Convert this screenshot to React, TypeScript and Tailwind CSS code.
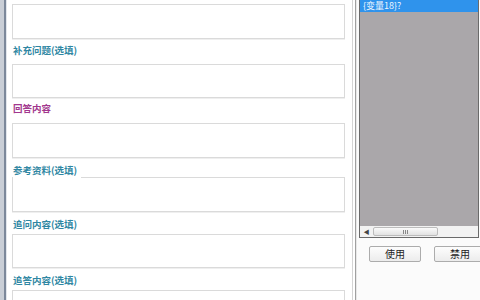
import React from "react";

const cjk = { fontFamily: '"Noto Sans CJK SC", "Liberation Sans", sans-serif' };

const Box = ({ className = "" }: { className?: string }) => (
  <div
    className={`mr-[7px] border border-[#dadada] bg-white shadow-[0_1px_0_#efefef] ${className}`}
  />
);

const Label = ({
  text,
  purple,
  className = "",
}: {
  text: string;
  purple?: boolean;
  className?: string;
}) => (
  <div
    className={`ml-[1px] text-[9.5px] font-bold leading-[12px] ${
      purple ? "text-[#a2378e]" : "text-[#2f87a3]"
    } ${className}`}
  >
    {text}
  </div>
);

export default function App() {
  return (
    <div className="flex h-[300px] w-[480px] overflow-hidden bg-white" style={cjk}>
      {/* window edge */}
      <div className="flex h-full shrink-0">
        <div className="w-[4px] bg-[#c9ced6]" />
        <div className="w-[2px] bg-[#7c889a]" />
        <div className="w-[1px] bg-[#e2e6ec]" />
      </div>

      {/* form column */}
      <div className="flex w-[345px] shrink-0 flex-col pl-[5px]">
        <Box className="mt-[4px] h-[35px] shrink-0" />
        <Label text="补充问题(选填)" className="mt-[5px]" />
        <Box className="mt-[8px] h-[34px] shrink-0" />
        <Label text="回答内容" purple className="mt-[4px]" />
        <Box className="mt-[9px] h-[35px] shrink-0" />
        <Label
          text="参考资料(选填)"
          className="relative z-10 mt-[6px] w-[68px] bg-white pb-[2px]"
        />
        <Box className="-mt-[1px] h-[35px] shrink-0" />
        <Label text="追问内容(选填)" className="mt-[6px]" />
        <Box className="mt-[4px] h-[34px] shrink-0" />
        <Label text="追答内容(选填)" className="mt-[6px]" />
        <Box className="mt-[4px] h-[34px] shrink-0" />
      </div>

      {/* splitter */}
      <div className="flex h-full shrink-0">
        <div className="w-[1px] bg-[#d4d4d4]" />
        <div className="w-[2px] bg-white" />
        <div className="w-[1px] bg-[#a0a0a0]" />
        <div className="w-[1px] bg-[#e8e8e8]" />
      </div>

      {/* variable list panel */}
      <div className="flex flex-1 flex-col bg-[#fbfbfb] pl-[2px]">
        <div className="flex h-[238px] w-[120px] flex-col border border-t-0 border-[#6a6a6a] bg-[#aaa7aa]">
          <div className="h-[12px] bg-[#2f93ec] pl-[3px] text-[9px] leading-[12px] text-[#eef6ff]">
            {"{变量18}?"}
          </div>
          <div className="flex-1" />
          <div className="flex h-[11px] items-center bg-[#f2f2f2]">
            <div className="flex w-[13px] items-center justify-center text-[6px] text-[#444]">◀</div>
            <div className="flex h-[9px] w-[65px] items-center justify-center rounded-[2px] border border-[#bcbcbc] bg-gradient-to-b from-[#fafafa] to-[#e2e2e2]">
              <div className="flex gap-[1px]">
                <div className="h-[4px] w-[1px] bg-[#888]" />
                <div className="h-[4px] w-[1px] bg-[#888]" />
                <div className="h-[4px] w-[1px] bg-[#888]" />
              </div>
            </div>
          </div>
        </div>
        <div className="mt-[8px] flex gap-[13px] pl-[10px]">
          <button className="h-[16px] w-[52px] shrink-0 rounded-[2px] border border-[#acacac] bg-gradient-to-b from-[#fdfdfd] to-[#ececec] text-[10px] leading-[14px] text-[#222]">
            使用
          </button>
          <button className="h-[16px] w-[52px] shrink-0 rounded-[2px] border border-[#acacac] bg-gradient-to-b from-[#fdfdfd] to-[#ececec] text-[10px] leading-[14px] text-[#222]">
            禁用
          </button>
        </div>
      </div>
    </div>
  );
}
